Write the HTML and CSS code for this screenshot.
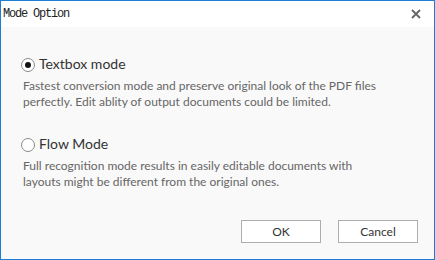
FILE: index.html
```html
<!DOCTYPE html>
<html lang="en">
<head>
    <meta charset="UTF-8">
    <title>Mode Option</title>
    <link rel="stylesheet" href="styles.css">
</head>
<body>
    <div class="dialog">
        <div class="titlebar">
            <span class="title">Mode Option</span>
            <svg class="close" width="10" height="10" viewBox="0 0 10 10">
                <path d="M1 1 L9 9 M9 1 L1 9" stroke="#666" stroke-width="1.8" fill="none"/>
            </svg>
        </div>

        <div class="content">
            <div class="option">
                <div class="option-head">
                    <span class="radio checked"></span>
                    <span class="option-name">Textbox mode</span>
                </div>
                <p class="option-desc">Fastest conversion mode and preserve original look of the PDF files<br>perfectly. Edit ablity of output documents could be limited.</p>
            </div>

            <div class="option">
                <div class="option-head">
                    <span class="radio"></span>
                    <span class="option-name">Flow Mode</span>
                </div>
                <p class="option-desc">Full recognition mode results in easily editable documents with<br>layouts might be different from the original ones.</p>
            </div>
        </div>

        <div class="buttons">
            <button>OK</button>
            <button>Cancel</button>
        </div>
    </div>
</body>
</html>
```

FILE: styles.css
```css
body {
    margin: 0;
    font-family: 'Lato', 'Liberation Sans', sans-serif;
}

.dialog {
    width: 435px;
    height: 260px;
    box-sizing: border-box;
    border: 1px solid #1a7fd4;
    background: #f9f9f9;
    display: flex;
    flex-direction: column;
}

.titlebar {
    flex-shrink: 0;
    height: 26px;
    background: #fff;
    display: flex;
    align-items: center;
    justify-content: space-between;
    padding: 0 13px 0 2px;
}

.title {
    font-family: 'Liberation Mono', monospace;
    font-size: 12px;
    letter-spacing: -1.2px;
    color: #222;
}

.close {
    display: block;
}

.content {
    flex: 1;
    padding: 26px 0 0 20px;
}

.option {
    margin-bottom: 23px;
}

.option-head {
    display: flex;
    align-items: center;
    gap: 4px;
    height: 20px;
}

.radio {
    width: 14px;
    height: 14px;
    box-sizing: border-box;
    border: 1px solid #8a8a8a;
    border-radius: 50%;
    background: #fff;
    display: flex;
    align-items: center;
    justify-content: center;
    margin-top: 3px;
}

.radio.checked::after {
    content: "";
    width: 6px;
    height: 6px;
    border-radius: 50%;
    background: #111;
}

.option-name {
    font-size: 14px;
    color: #333;
}

.option-desc {
    margin: 5px 0 0 2px;
    font-size: 12px;
    line-height: 16px;
    white-space: nowrap;
    color: #666;
}

.buttons {
    flex-shrink: 0;
    display: flex;
    justify-content: flex-end;
    gap: 17px;
    padding: 0 16px 16px 0;
}

button {
    width: 80px;
    height: 23px;
    background: #fff;
    border: 1px solid #adadad;
    font-family: inherit;
    font-size: 12px;
    color: #333;
    padding: 0;
}
```
